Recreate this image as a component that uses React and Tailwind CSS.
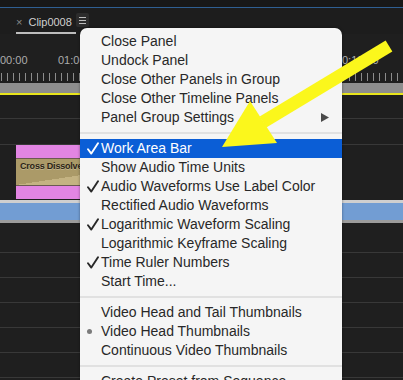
import { Fragment } from "react";

const SECTIONS = [
  [
    { label: "Close Panel" },
    { label: "Undock Panel" },
    { label: "Close Other Panels in Group" },
    { label: "Close Other Timeline Panels" },
    { label: "Panel Group Settings", submenu: true },
  ],
  [
    { label: "Work Area Bar", mark: "check", active: true },
    { label: "Show Audio Time Units" },
    { label: "Audio Waveforms Use Label Color", mark: "check" },
    { label: "Rectified Audio Waveforms" },
    { label: "Logarithmic Waveform Scaling", mark: "check" },
    { label: "Logarithmic Keyframe Scaling" },
    { label: "Time Ruler Numbers", mark: "check" },
    { label: "Start Time..." },
  ],
  [
    { label: "Video Head and Tail Thumbnails" },
    { label: "Video Head Thumbnails", mark: "dot" },
    { label: "Continuous Video Thumbnails" },
  ],
  [{ label: "Create Preset from Sequence" }],
];

function Check({ color }) {
  return (
    <svg width="12" height="13" viewBox="0 0 12 13" fill="none">
      <path d="M1 7.2 L4.3 11.6 L11 1.2" stroke={color} strokeWidth="1.9" strokeLinecap="round" strokeLinejoin="round" />
    </svg>
  );
}

function MenuRow({ item }) {
  const fg = item.active ? "#ffffff" : "#282828";
  return (
    <div
      className={`flex items-center h-[19px] pr-[13px] ${item.active ? "bg-[#0b5ed6] text-white" : "text-[#282828]"}`}
    >
      <div className="w-[21px] h-full flex items-center pl-[7px] shrink-0">
        {item.mark === "check" && <Check color={fg} />}
        {item.mark === "dot" && <div className="w-[5px] h-[5px] rounded-full bg-[#7b7b7b]" />}
      </div>
      <span className="flex-1 whitespace-nowrap">{item.label}</span>
      {item.submenu && (
        <svg width="8" height="9" viewBox="0 0 8 9">
          <polygon points="0,0 8,4.5 0,9" fill="#4a4a4a" />
        </svg>
      )}
    </div>
  );
}

function ContextMenu() {
  return (
    <div className="absolute left-[80px] top-[28px] w-[262px] h-[360px] bg-[#f5f5f5] rounded-t-[7px] pt-[4px] text-[14px] leading-[19px] shadow-[0_0_3px_rgba(0,0,0,0.4)] overflow-hidden font-['Liberation_Sans',Arial,sans-serif]">
      {SECTIONS.map((items, i) => (
        <Fragment key={i}>
          {i > 0 && <div className="h-[2px] my-[5px] bg-[#e1e1e1]" />}
          {items.map((it) => (
            <MenuRow key={it.label} item={it} />
          ))}
        </Fragment>
      ))}
    </div>
  );
}

function Ticks() {
  return (
    <div className="h-[8px] flex gap-[5px] pl-[1px] overflow-hidden">
      {Array.from({ length: 70 }).map((_, i) => (
        <div key={i} className="w-px shrink-0 bg-[#8c8c8c]" />
      ))}
    </div>
  );
}

function TrackLine() {
  return <div className="h-px bg-[#383838]" />;
}

export default function App() {
  return (
    <div className="relative w-[403px] h-[380px] overflow-hidden bg-[#1f1f1f] font-['Liberation_Sans',Arial,sans-serif] select-none">
      <div className="h-[7px] bg-[#181818]" />
      <div className="h-px bg-[#2f5f92]" />

      {/* tab bar */}
      <div className="h-[26px] flex items-center bg-[#1d1d1d]">
        <div className="ml-[16px] h-full flex items-center gap-[6px] border-b-2 border-[#bdbdbd] pr-[4px] pt-[4px]">
          <span className="text-[11px] text-[#8a8a8a] leading-none">×</span>
          <span className="text-[11px] text-[#d0d0d0] leading-none">Clip0008</span>
        </div>
        <div className="w-[13px] h-[14px] rounded-[2px] bg-[#2c2c2c] flex flex-col justify-center gap-[2px] px-[3px] mt-[-2px]">
          <div className="h-px bg-[#bdbdbd]" />
          <div className="h-px bg-[#bdbdbd]" />
          <div className="h-px bg-[#bdbdbd]" />
        </div>
      </div>

      {/* ruler labels */}
      <div className="h-[39px] flex items-end pb-[6px] text-[11px] leading-[13px] text-[#acacac]">
        <span className="w-[58px] shrink-0">00:00</span>
        <span className="w-[284px] shrink-0">01:00:00</span>
        <span>0:10:00</span>
      </div>
      <Ticks />
      <div className="h-[2px]" />
      <div className="h-[10px] bg-[#8e8e8e]" />
      <div className="h-[2px] bg-[#e9e51c]" />

      <div className="h-[23px]" />
      <TrackLine />
      <div className="h-[25px]" />
      <TrackLine />

      {/* clip track */}
      <div className="h-[54px] pl-[16px] flex">
        <div className="w-[170px] flex flex-col bg-[#e285e3]">
          <div className="h-[13px]" />
          <div className="h-px bg-[#6b5a52]" />
          <div className="h-[26px] pl-[4px] pt-[2px] bg-[linear-gradient(to_bottom_right,#ab9a68_50%,#c4b382_50%)]">
            <div className="text-[9px] leading-[10px] font-bold text-[#2b2417] tracking-[-0.2px] whitespace-nowrap [text-shadow:0_1px_0_rgba(255,255,255,0.25)]">
              Cross Dissolve
            </div>
          </div>
          <div className="h-px bg-[#6b5a52]" />
        </div>
      </div>

      <div className="h-px" />
      <div className="h-[3px] bg-[#cfcfcf]" />
      <div className="h-[17px] bg-[#729dd3]" />
      <div className="h-[3px] bg-[#9b9b9b]" />

      <div className="h-[29px]" />
      <TrackLine />
      {Array.from({ length: 5 }).map((_, i) => (
        <Fragment key={i}>
          <div className="h-[24px]" />
          <TrackLine />
        </Fragment>
      ))}

      <ContextMenu />

      {/* annotation arrow */}
      <svg className="absolute inset-0 pointer-events-none" width="403" height="380" viewBox="0 0 403 380">
        <line x1="263" y1="122" x2="389" y2="46" stroke="#fbf71c" strokeWidth="13" />
        <polygon points="222,147 250,101 277,143" fill="#fbf71c" />
      </svg>
    </div>
  );
}
